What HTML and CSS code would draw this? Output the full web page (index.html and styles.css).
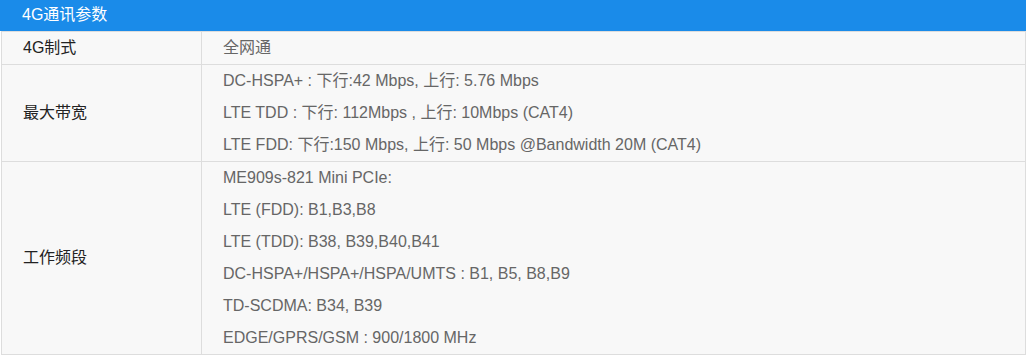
FILE: index.html
```html
<!DOCTYPE html>
<html lang="zh-CN">
<head>
  <meta charset="UTF-8">
  <title>4G通讯参数</title>
  <link rel="stylesheet" href="styles.css">
</head>
<body>

<div class="spec">
  <div class="spec-title">4G通讯参数</div>
  <table class="spec-table">
    <tr>
      <td class="label">4G制式</td>
      <td class="value"><p>全网通</p></td>
    </tr>
    <tr>
      <td class="label">最大带宽</td>
      <td class="value">
        <p>DC-HSPA+ : 下行:42 Mbps, 上行: 5.76 Mbps</p>
        <p>LTE TDD : 下行: 112Mbps , 上行: 10Mbps (CAT4)</p>
        <p>LTE FDD: 下行:150 Mbps, 上行: 50 Mbps @Bandwidth 20M (CAT4)</p>
      </td>
    </tr>
    <tr>
      <td class="label">工作频段</td>
      <td class="value">
        <p>ME909s-821 Mini PCIe:</p>
        <p>LTE (FDD): B1,B3,B8</p>
        <p>LTE (TDD): B38, B39,B40,B41</p>
        <p>DC-HSPA+/HSPA+/HSPA/UMTS : B1, B5, B8,B9</p>
        <p>TD-SCDMA: B34, B39</p>
        <p>EDGE/GPRS/GSM : 900/1800 MHz</p>
      </td>
    </tr>
  </table>
</div>

</body>
</html>
```

FILE: styles.css
```css
body {
  margin: 0;
  font-family: "Liberation Sans", Arial, "Noto Sans CJK SC", sans-serif;
  font-size: 16px;
  background: #fff;
}

.spec {
  width: 1026px;
}

.spec-title {
  height: 31px;
  line-height: 30px;
  padding-left: 22px;
  background: #1a8be9;
  color: #fff;
}

.spec-table {
  width: 1025px;
  margin-left: 1px;
  border-collapse: collapse;
  border: 1px solid #ddd;
  background: #f8f8f8;
}

.spec-table td {
  border: 1px solid #ddd;
  padding: 0 0 0 21px;
  vertical-align: middle;
  line-height: 28px;
}

.spec-table .label {
  width: 178px;
  color: #222;
}

.spec-table .value {
  color: #666;
}

.spec-table p {
  margin: 0;
  line-height: 32px;
}
```
